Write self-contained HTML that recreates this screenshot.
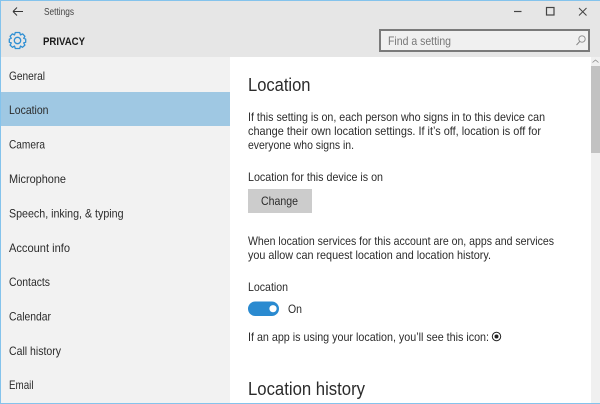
<!DOCTYPE html>
<html>
<head>
<meta charset="utf-8">
<style>
html,body{margin:0;padding:0;background:#fff}
svg{display:block}
text{font-family:"Liberation Sans",sans-serif;fill:#2b2b2b}
.s{font-size:12px}
#all{filter:blur(0.25px)}
</style>
</head>
<body>
<svg width="600" height="404" viewBox="0 0 600 404" xmlns="http://www.w3.org/2000/svg">
<rect width="600" height="404" fill="#fff"/>
<g id="all">
<rect x="0" y="0" width="600" height="57" fill="#e6e6e6"/>
<rect x="0" y="57" width="230" height="347" fill="#f2f2f2"/>
<rect x="0" y="92" width="230" height="34" fill="#9fc8e3"/>
<rect x="591" y="57" width="9" height="347" fill="#f0f0f0"/>
<rect x="591" y="66" width="9" height="87" fill="#c2c2c2"/>
<path d="M592.5 62.5l3-2.5 3 2.5" fill="none" stroke="#8a8a8a" stroke-width="0.8"/>

<path d="M13 11.5H23M13 11.5l4-4M13 11.5l4 4" fill="none" stroke="#333" stroke-width="1"/>
<text x="44" y="15" font-size="10.5" textLength="30" lengthAdjust="spacingAndGlyphs" style="fill:#444">Settings</text>
<g transform="translate(17.5,40.5)" fill="none" stroke="#2f8fd3" stroke-width="1.3">
<circle r="3.2"/>
<path d="M-2.2-8L2.2-8 3-5.6 5.2-6.6 7.4-4.2 6.2-2.2 8.2-1.4 8.2 1.8 6.2 2.4 7.4 4.6 5 6.8 3 5.6 2.2 8-2.2 8-3 5.6-5 6.8-7.4 4.6-6.2 2.4-8.2 1.8-8.2-1.4-6.2-2.2-7.4-4.2-5.2-6.6-3-5.6Z" stroke-linejoin="round"/>
</g>
<text x="43" y="45" font-size="11" font-weight="bold" textLength="42" lengthAdjust="spacingAndGlyphs" style="fill:#1a1a1a">PRIVACY</text>

<path d="M514 11.5h7.5" stroke="#444" stroke-width="1.2"/>
<rect x="546.5" y="7.5" width="7.5" height="7.5" fill="none" stroke="#444" stroke-width="1.2"/>
<path d="M579 8l7.5 7.5M586.5 8L579 15.5" stroke="#444" stroke-width="1"/>

<rect x="380" y="30" width="209" height="21" fill="#f0f0f0" stroke="#7a7a7a" stroke-width="2"/>
<text x="388" y="45" font-size="12" textLength="63" lengthAdjust="spacingAndGlyphs" style="fill:#777">Find a setting</text>
<circle cx="582" cy="39" r="3.2" fill="none" stroke="#888" stroke-width="0.9"/>
<path d="M579.7 41.5L576.5 45" stroke="#888" stroke-width="1"/>

<text class="s" x="9" y="80" textLength="36" lengthAdjust="spacingAndGlyphs">General</text>
<text class="s" x="9" y="114" textLength="39.5" lengthAdjust="spacingAndGlyphs">Location</text>
<text class="s" x="9" y="148.5" textLength="36" lengthAdjust="spacingAndGlyphs">Camera</text>
<text class="s" x="9" y="183" textLength="57" lengthAdjust="spacingAndGlyphs">Microphone</text>
<text class="s" x="9" y="217.5" textLength="114.5" lengthAdjust="spacingAndGlyphs">Speech, inking, &amp; typing</text>
<text class="s" x="9" y="252" textLength="61" lengthAdjust="spacingAndGlyphs">Account info</text>
<text class="s" x="9" y="286" textLength="41" lengthAdjust="spacingAndGlyphs">Contacts</text>
<text class="s" x="9" y="320.5" textLength="42" lengthAdjust="spacingAndGlyphs">Calendar</text>
<text class="s" x="9" y="355" textLength="52" lengthAdjust="spacingAndGlyphs">Call history</text>
<text class="s" x="9" y="389" textLength="24.5" lengthAdjust="spacingAndGlyphs">Email</text>

<text x="248" y="91" font-size="18" textLength="62.5" lengthAdjust="spacingAndGlyphs">Location</text>
<text class="s" x="248" y="121" textLength="297" lengthAdjust="spacingAndGlyphs">If this setting is on, each person who signs in to this device can</text>
<text class="s" x="248" y="135" textLength="293" lengthAdjust="spacingAndGlyphs">change their own location settings. If it’s off, location is off for</text>
<text class="s" x="248" y="149" textLength="106" lengthAdjust="spacingAndGlyphs">everyone who signs in.</text>
<text class="s" x="248" y="181" textLength="135" lengthAdjust="spacingAndGlyphs">Location for this device is on</text>
<rect x="248" y="189" width="64" height="24" fill="#cccccc"/>
<text class="s" x="261" y="205" textLength="37" lengthAdjust="spacingAndGlyphs">Change</text>
<text class="s" x="248" y="245" textLength="306" lengthAdjust="spacingAndGlyphs">When location services for this account are on, apps and services</text>
<text class="s" x="248" y="259" textLength="243" lengthAdjust="spacingAndGlyphs">you allow can request location and location history.</text>
<text class="s" x="248" y="291" textLength="40" lengthAdjust="spacingAndGlyphs">Location</text>
<rect x="248" y="301.5" width="31" height="14.5" rx="7.25" fill="#2a8ad0"/>
<circle cx="273" cy="308.7" r="3.6" fill="#fff"/>
<text class="s" x="288" y="313" textLength="14" lengthAdjust="spacingAndGlyphs">On</text>
<text class="s" x="248" y="341" textLength="241" lengthAdjust="spacingAndGlyphs">If an app is using your location, you’ll see this icon:</text>
<circle cx="496.5" cy="336.5" r="4.2" fill="none" stroke="#222" stroke-width="1"/>
<circle cx="496.5" cy="336.5" r="2" fill="#222"/>
<text x="248" y="395" font-size="18" textLength="117" lengthAdjust="spacingAndGlyphs">Location history</text>
</g>
<path d="M0.5 404V0.5H600M0 403.5H600" fill="none" stroke="#84c3ec" stroke-width="1"/>
</svg>
</body>
</html>
